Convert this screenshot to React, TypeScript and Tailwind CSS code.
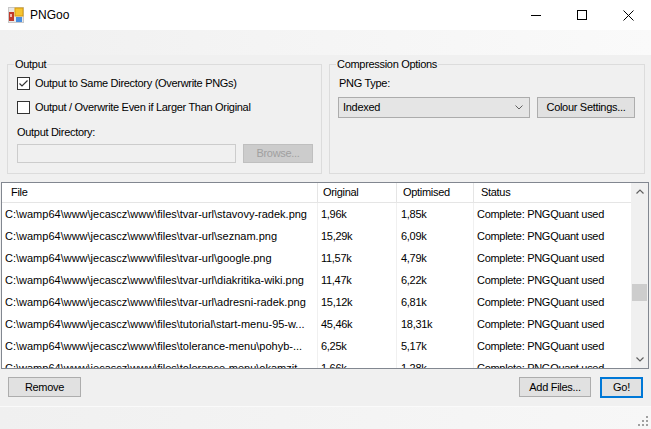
import React from "react";

const rows = [
  ["C:\\wamp64\\www\\jecascz\\www\\files\\tvar-url\\stavovy-radek.png", "1,96k", "1,85k"],
  ["C:\\wamp64\\www\\jecascz\\www\\files\\tvar-url\\seznam.png", "15,29k", "6,09k"],
  ["C:\\wamp64\\www\\jecascz\\www\\files\\tvar-url\\google.png", "11,57k", "4,79k"],
  ["C:\\wamp64\\www\\jecascz\\www\\files\\tvar-url\\diakritika-wiki.png", "11,47k", "6,22k"],
  ["C:\\wamp64\\www\\jecascz\\www\\files\\tvar-url\\adresni-radek.png", "15,12k", "6,81k"],
  ["C:\\wamp64\\www\\jecascz\\www\\files\\tutorial\\start-menu-95-w...", "45,46k", "18,31k"],
  ["C:\\wamp64\\www\\jecascz\\www\\files\\tolerance-menu\\pohyb-...", "6,25k", "5,17k"],
  ["C:\\wamp64\\www\\jecascz\\www\\files\\tolerance-menu\\okamzit...", "1,66k", "1,28k"],
];

function AppIcon() {
  return (
    <svg width="16" height="16" viewBox="0 0 16 16">
      <rect x="0.5" y="0.5" width="15" height="15" fill="#e8e8e8" stroke="#c8c8c8" />
      <rect x="1" y="5" width="5" height="9" fill="#c0392b" />
      <rect x="2" y="7" width="2" height="3" fill="#f2b8b0" />
      <rect x="7" y="1" width="8" height="8" fill="#f5c431" stroke="#d69a10" />
      <rect x="8" y="10" width="6" height="5" fill="#4a8fe0" />
    </svg>
  );
}

function Checkbox({ checked }: { checked?: boolean }) {
  return (
    <div className="w-[13px] h-[13px] border border-[#333333] bg-white flex items-center justify-center shrink-0">
      {checked && (
        <svg width="11" height="11" viewBox="0 0 11 11">
          <path d="M1.5 5.5 L4 8 L9.5 2.5" fill="none" stroke="#333333" strokeWidth="1.2" />
        </svg>
      )}
    </div>
  );
}

export default function App() {
  const font = { fontFamily: '"Liberation Sans", Arial, sans-serif' };
  return (
    <div
      className="w-[651px] h-[429px] bg-[#f0f0f0] flex flex-col text-[11px] tracking-[-0.3px] text-black overflow-hidden leading-[13px]"
      style={font}
    >
      {/* Title bar */}
      <div className="h-[30px] bg-white flex items-center shrink-0">
        <div className="ml-[8px] mr-[6px] flex items-center">
          <AppIcon />
        </div>
        <span className="text-[12px] tracking-normal">PNGoo</span>
        <div className="ml-auto flex h-full">
          <div className="w-[46px] h-full flex items-center justify-center">
            <svg width="10" height="10" viewBox="0 0 10 10">
              <path d="M0 5.5 H10" stroke="#000" strokeWidth="1" />
            </svg>
          </div>
          <div className="w-[46px] h-full flex items-center justify-center">
            <svg width="10" height="10" viewBox="0 0 10 10">
              <rect x="0.5" y="0.5" width="9" height="9" fill="none" stroke="#000" strokeWidth="1" />
            </svg>
          </div>
          <div className="w-[46px] h-full flex items-center justify-center">
            <svg width="11" height="11" viewBox="0 0 11 11">
              <path d="M0.5 0.5 L10.5 10.5 M10.5 0.5 L0.5 10.5" stroke="#000" strokeWidth="1" />
            </svg>
          </div>
        </div>
      </div>

      {/* Tool strip */}
      <div className="h-[25px] shrink-0 bg-gradient-to-r from-[#f0f0f0] to-[#fafafa]" />

      {/* Group boxes */}
      <div className="flex pl-[7px] gap-[7px] mt-[3px]">
        <fieldset className="w-[315px] h-[116px] border border-[#dcdcdc]">
          <legend className="ml-[6px] px-[1px]">Output</legend>
          <div className="pl-[9px] pr-[7px]">
            <div className="flex items-center gap-[5px] mt-[6px]">
              <Checkbox checked />
              <span>Output to Same Directory (Overwrite PNGs)</span>
            </div>
            <div className="flex items-center gap-[5px] mt-[11px]">
              <Checkbox />
              <span>Output / Overwrite Even if Larger Than Original</span>
            </div>
            <div className="mt-[12px]">Output Directory:</div>
            <div className="flex gap-[7px] mt-[5px]">
              <div className="w-[219px] h-[19px] border border-[#cccccc] bg-[#f0f0f0]" />
              <div className="w-[70px] h-[19px] border border-[#bfbfbf] bg-[#cccccc] flex items-center justify-center text-[#a0a0a0]">
                Browse...
              </div>
            </div>
          </div>
        </fieldset>
        <fieldset className="w-[316px] h-[116px] border border-[#dcdcdc]">
          <legend className="ml-[6px] px-[1px]">Compression Options</legend>
          <div className="pl-[8px]">
            <div className="mt-[6px] pl-[1px]">PNG Type:</div>
            <div className="flex gap-[7px] mt-[7px]">
              <div className="w-[192px] h-[21px] border border-[#acacac] bg-[#e5e5e5] flex items-center pl-[4px] pr-[6px]">
                <span>Indexed</span>
                <svg className="ml-auto" width="8" height="5" viewBox="0 0 8 5">
                  <path d="M0.5 0.5 L4 4 L7.5 0.5" fill="none" stroke="#606060" strokeWidth="1" />
                </svg>
              </div>
              <div className="w-[98px] h-[21px] border border-[#adadad] bg-[#e1e1e1] flex items-center justify-center">
                Colour Settings...
              </div>
            </div>
          </div>
        </fieldset>
      </div>

      {/* List view */}
      <div className="mt-[8px] ml-[1px] w-[648px] h-[187px] border border-[#828790] bg-white flex overflow-hidden">
        <div className="flex-1 flex flex-col overflow-hidden">
          <div className="h-[20px] flex shrink-0 border-b border-[#e5e5e5]">
            <div className="w-[316px] pl-[9px] flex items-center border-r border-[#e5e5e5]">File</div>
            <div className="w-[79px] pl-[5px] flex items-center border-r border-[#e5e5e5]">Original</div>
            <div className="w-[77px] pl-[6px] flex items-center border-r border-[#e5e5e5]">Optimised</div>
            <div className="flex-1 pl-[7px] flex items-center">Status</div>
          </div>
          <div className="flex-1 flex flex-col overflow-hidden">
            {rows.map((r, i) => (
              <div key={i} className="h-[22px] flex shrink-0">
                <div className="w-[316px] pl-[3px] flex items-center border-r border-[#f0f0f0] whitespace-nowrap overflow-hidden tracking-normal">{r[0]}</div>
                <div className="w-[79px] pl-[3px] flex items-center border-r border-[#f0f0f0]">{r[1]}</div>
                <div className="w-[77px] pl-[4px] flex items-center border-r border-[#f0f0f0]">{r[2]}</div>
                <div className="flex-1 pl-[3px] flex items-center whitespace-nowrap">Complete: PNGQuant used</div>
              </div>
            ))}
          </div>
        </div>
        {/* Scrollbar */}
        <div className="w-[17px] h-full bg-[#f0f0f0] flex flex-col items-center shrink-0">
          <div className="h-[17px] w-full flex items-center justify-center">
            <svg width="8" height="5" viewBox="0 0 8 5">
              <path d="M0.5 4.5 L4 1 L7.5 4.5" fill="none" stroke="#606060" strokeWidth="1.2" />
            </svg>
          </div>
          <div className="mt-[84px] w-[15px] h-[17px] bg-[#cdcdcd]" />
          <div className="mt-auto h-[17px] w-full flex items-center justify-center">
            <svg width="8" height="5" viewBox="0 0 8 5">
              <path d="M0.5 0.5 L4 4 L7.5 0.5" fill="none" stroke="#606060" strokeWidth="1.2" />
            </svg>
          </div>
        </div>
      </div>

      {/* Buttons */}
      <div className="flex items-center mt-[8px] px-[8px] h-[20px]">
        <div className="w-[73px] h-[20px] border border-[#adadad] bg-[#e1e1e1] flex items-center justify-center">Remove</div>
        <div className="ml-auto w-[72px] h-[20px] border border-[#adadad] bg-[#e1e1e1] flex items-center justify-center">Add Files...</div>
        <div className="ml-[9px] w-[43px] h-[21px] border-2 border-[#0078d7] bg-[#e1e1e1] flex items-center justify-center">Go!</div>
      </div>

      {/* Status bar */}
      <div className="mt-auto h-[23px] border-t border-[#fafafa] bg-gradient-to-r from-[#f0f0f0] to-[#f7f7f7] flex items-end justify-end pr-[2px] pb-[2px]">
        <svg width="11" height="11" viewBox="0 0 11 11">
          <g fill="#a0a0a0">
            <rect x="8" y="0" width="2" height="2" />
            <rect x="4" y="4" width="2" height="2" />
            <rect x="8" y="4" width="2" height="2" />
            <rect x="0" y="8" width="2" height="2" />
            <rect x="4" y="8" width="2" height="2" />
            <rect x="8" y="8" width="2" height="2" />
          </g>
        </svg>
      </div>
    </div>
  );
}
